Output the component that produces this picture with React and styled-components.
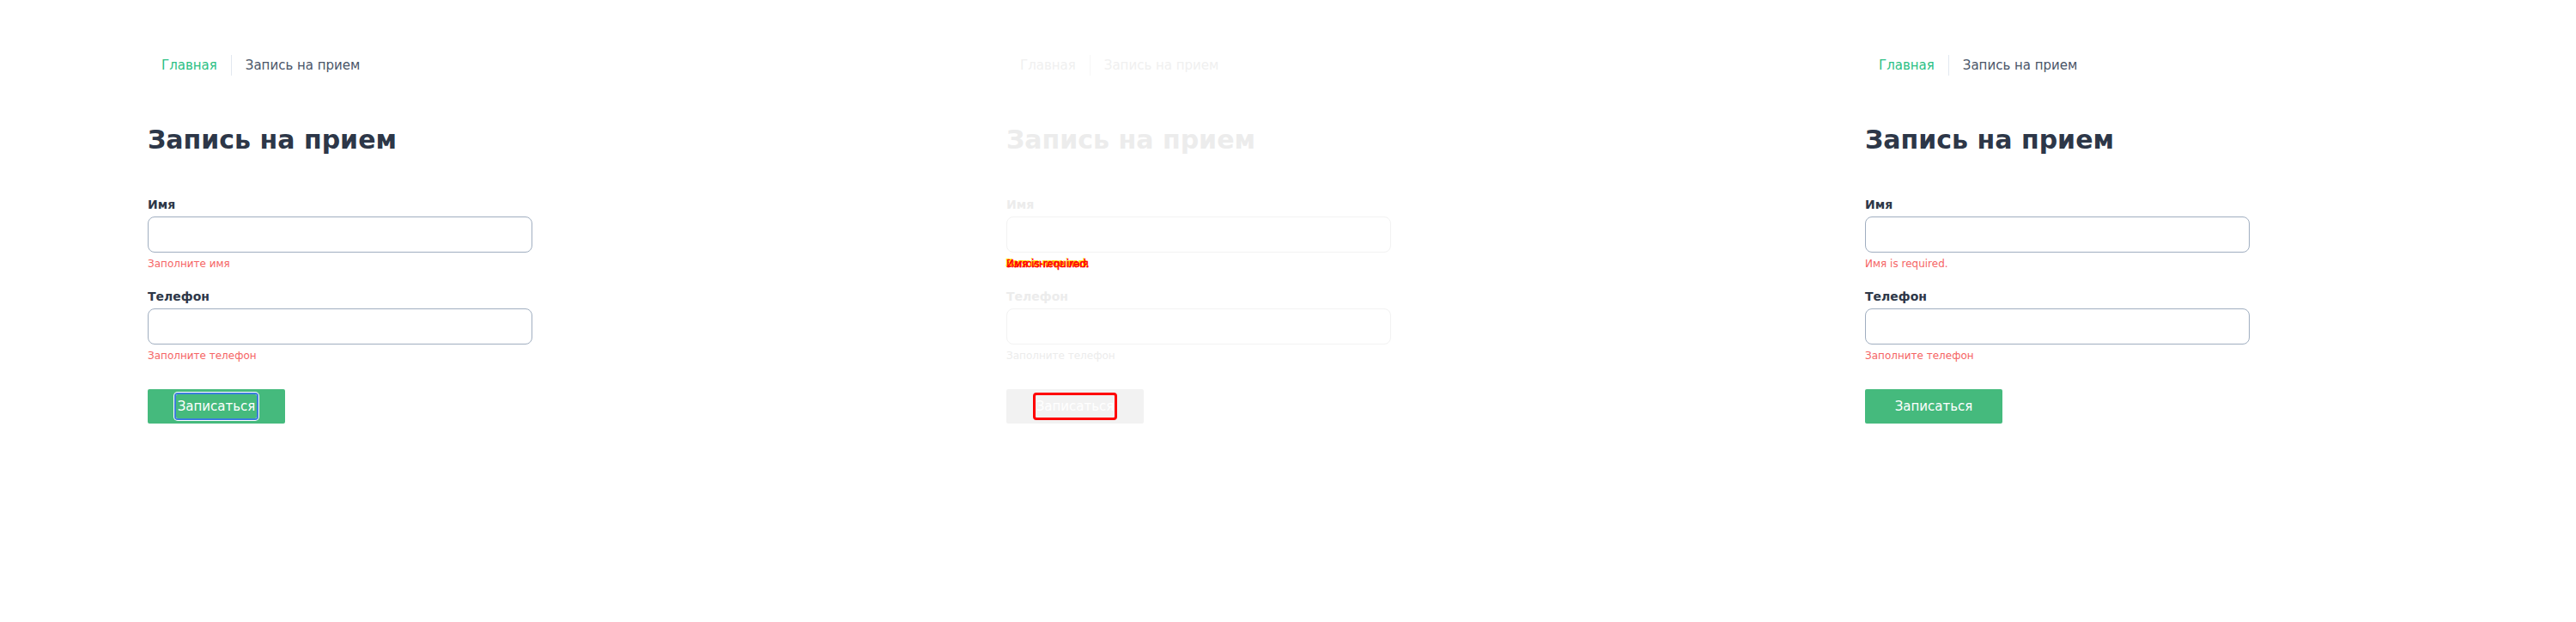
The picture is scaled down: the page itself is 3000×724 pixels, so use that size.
import React from "react";
import styled, { createGlobalStyle, css } from "styled-components";

const colors = {
  green: "#2bbf84",
  button: "#45ba7d",
  dark: "#2d3748",
  crumb: "#4a5568",
  divider: "#e2e8f0",
  border: "#a0aec0",
  error: "#f56565",
  faint: "#ececec",
  faintBorder: "#f2f2f2",
  diff: "#ff0000",
  diffEdge: "#ffff00",
};

const GlobalStyle = createGlobalStyle`
  * { box-sizing: border-box; }
  html, body {
    margin: 0;
    padding: 0;
    background: #ffffff;
    font-family: "DejaVu Sans", "Noto Sans", sans-serif;
  }
`;

const Strip = styled.div`
  display: flex;
  width: 3000px;
  height: 724px;
  overflow: hidden;
`;

const Panel = styled.section`
  width: 1000px;
  flex-shrink: 0;
  padding: 64px 0 0 172px;
`;

const Crumbs = styled.nav`
  display: flex;
  height: 24px;
`;

const Crumb = styled.span`
  padding: 0 16px;
  font-size: 15px;
  line-height: 24px;
  color: ${p => (p.faded ? "#f0f0f0" : p.home ? colors.green : colors.crumb)};
  ${p => !p.home && css`
    border-left: 1px solid ${p.faded ? "#f7f7f7" : colors.divider};
  `}
`;

const Title = styled.h1`
  margin: 57px 0 0;
  font-size: 30px;
  line-height: 36px;
  font-weight: 700;
  color: ${p => (p.faded ? colors.faint : colors.dark)};
`;

const Form = styled.form`
  margin-top: 47px;
  width: 448px;
`;

const Field = styled.div`
  margin-bottom: 20px;
`;

const Label = styled.label`
  display: block;
  font-size: 14px;
  line-height: 20px;
  font-weight: 700;
  margin-bottom: 4px;
  color: ${p => (p.faded ? colors.faint : colors.dark)};
`;

const Input = styled.div`
  height: 42px;
  border: 1px solid ${p => (p.faded ? colors.faintBorder : colors.border)};
  border-radius: 8px;
  background: #fff;
`;

const ErrorText = styled.p`
  position: relative;
  margin: 5px 0 0;
  font-size: 12px;
  line-height: 16px;
  color: ${p => (p.faded ? colors.faint : colors.error)};
  ${p => p.diff && css`
    color: ${colors.diff};
    -webkit-text-stroke: 0.5px ${colors.diff};
    text-shadow: -1px -1px 0 ${colors.diffEdge};
  `}
`;

const Ghost = styled.span`
  position: absolute;
  left: 0;
  top: 0;
`;

const Actions = styled.div`
  margin-top: 31px;
`;

const SubmitBox = styled.div`
  display: flex;
  align-items: center;
  justify-content: center;
  width: 160px;
  height: 40px;
  border-radius: 2px;
  background: ${p => (p.faded ? "#f2f2f2" : colors.button)};
`;

const SubmitText = styled.span`
  padding: 3px 2px;
  font-size: 15px;
  line-height: 22px;
  color: #ffffff;
  border-radius: 2px;
  ${p => p.focused && css`
    outline: 2px solid #3b7ddd;
    outline-offset: 0;
    box-shadow: 0 0 0 3px #ffffff;
  `}
  ${p => p.diff && css`
    outline: 3px solid ${colors.diff};
    outline-offset: -1px;
  `}
`;

const FormPanel = ({ firstError, faded, focused, diff }) => (
  <Panel>
    <Crumbs>
      <Crumb home faded={faded}>Главная</Crumb>
      <Crumb faded={faded}>Запись на прием</Crumb>
    </Crumbs>
    <Title faded={faded}>Запись на прием</Title>
    <Form>
      <Field>
        <Label faded={faded}>Имя</Label>
        <Input faded={faded} />
        {diff ? (
          <ErrorText diff>
            Заполните имя
            <Ghost>Имя is required.</Ghost>
          </ErrorText>
        ) : (
          <ErrorText>{firstError}</ErrorText>
        )}
      </Field>
      <Field>
        <Label faded={faded}>Телефон</Label>
        <Input faded={faded} />
        <ErrorText faded={faded}>Заполните телефон</ErrorText>
      </Field>
      <Actions>
        <SubmitBox faded={faded}>
          <SubmitText focused={focused} diff={diff}>Записаться</SubmitText>
        </SubmitBox>
      </Actions>
    </Form>
  </Panel>
);

const App = () => (
  <>
    <GlobalStyle />
    <Strip>
      <FormPanel firstError="Заполните имя" focused />
      <FormPanel faded diff />
      <FormPanel firstError="Имя is required." />
    </Strip>
  </>
);

export default App;
